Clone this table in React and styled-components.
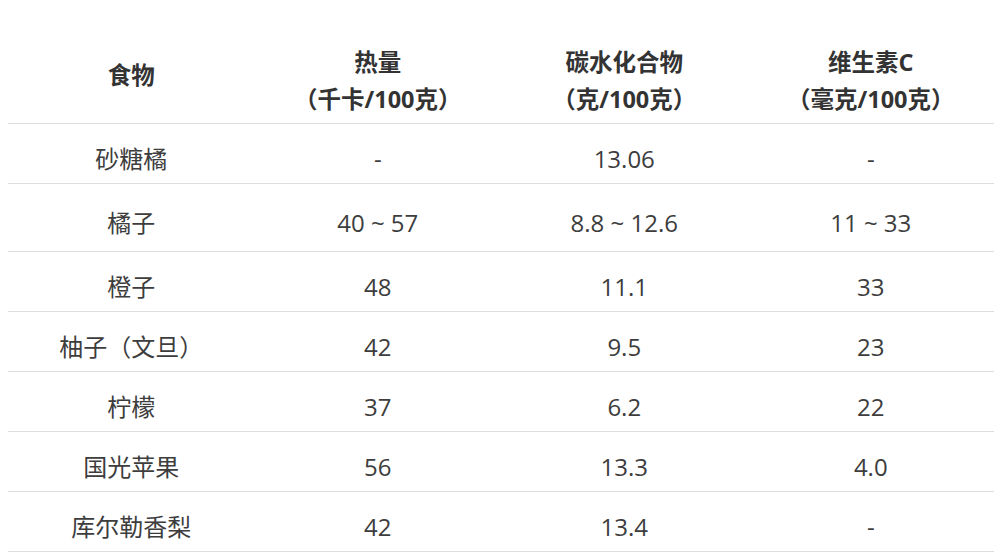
import React from "react";
import styled, { createGlobalStyle } from "styled-components";

const GlobalStyle = createGlobalStyle`
  html, body {
    margin: 0;
    padding: 0;
    background: #ffffff;
  }
  body {
    font-family: "Open Sans", "Noto Sans CJK SC", sans-serif;
    color: #333333;
  }
`;

const Page = styled.div`
  width: 1003px;
  height: 558px;
  padding: 28px 9px 0 8px;
  box-sizing: border-box;
  overflow: hidden;
`;

const Table = styled.div`
  display: grid;
  grid-template-columns: repeat(4, 1fr);
  width: 986px;
`;

const HeadCell = styled.div`
  height: 96px;
  box-sizing: border-box;
  padding-top: ${(p) => (p.single ? "0" : "10px")};
  display: flex;
  flex-direction: column;
  align-items: center;
  justify-content: center;
  border-bottom: 1px solid #dedede;
  font-size: 23.5px;
  font-weight: 700;
  line-height: 37px;
  color: #333333;
  text-align: center;
`;

const Cell = styled.div`
  height: ${(p) => p.h || 60}px;
  box-sizing: border-box;
  padding-top: 10px;
  display: flex;
  align-items: center;
  justify-content: center;
  border-bottom: 1px solid #dedede;
  font-size: 24px;
  line-height: 34px;
  color: #3d3d3d;
`;

const headers = [
  ["食物"],
  ["热量", "（千卡/100克）"],
  ["碳水化合物", "（克/100克）"],
  ["维生素C", "（毫克/100克）"],
];

const rows = [
  { cells: ["砂糖橘", "-", "13.06", "-"] },
  { cells: ["橘子", "40 ~ 57", "8.8 ~ 12.6", "11 ~ 33"], h: 68 },
  { cells: ["橙子", "48", "11.1", "33"] },
  { cells: ["柚子（文旦）", "42", "9.5", "23"] },
  { cells: ["柠檬", "37", "6.2", "22"] },
  { cells: ["国光苹果", "56", "13.3", "4.0"] },
  { cells: ["库尔勒香梨", "42", "13.4", "-"] },
];

export default function App() {
  return (
    <>
      <GlobalStyle />
      <Page>
        <Table>
          {headers.map((lines, i) => (
            <HeadCell key={i} single={lines.length === 1}>
              {lines.map((l) => (
                <span key={l}>{l}</span>
              ))}
            </HeadCell>
          ))}
          {rows.map((row, r) =>
            row.cells.map((c, i) => (
              <Cell key={r + "-" + i} h={row.h}>
                {c}
              </Cell>
            ))
          )}
        </Table>
      </Page>
    </>
  );
}
